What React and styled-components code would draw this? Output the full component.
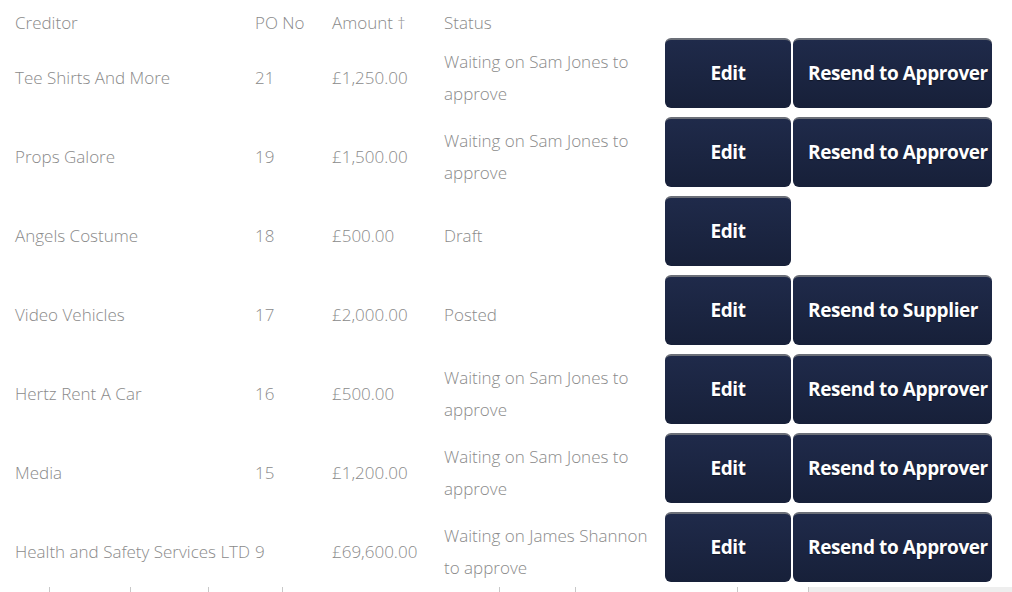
import React from 'react';
import styled, { createGlobalStyle } from 'styled-components';

const GlobalStyle = createGlobalStyle`
  html, body {
    margin: 0;
    padding: 0;
    background: #ffffff;
    font-family: "Open Sans", "Liberation Sans", sans-serif;
    overflow: hidden;
  }
`;

const Page = styled.div`
  width: 1012px;
  height: 592px;
  overflow: hidden;
  display: flex;
  flex-direction: column;
`;

const Grid = styled.div`
  display: grid;
  grid-template-columns: 240px 77px 112px 221px 330px;
  padding-left: 15px;
  color: #8a8a8a;
  font-weight: 300;
  font-size: 17px;
`;

const HeadCell = styled.div`
  height: 35px;
  padding-top: 12px;
  box-sizing: border-box;
  line-height: 22px;
  white-space: nowrap;
`;

const Cell = styled.div`
  height: 79px;
  display: flex;
  align-items: center;
  padding-top: 7px;
  box-sizing: border-box;
  white-space: ${p => (p.$wrap ? 'normal' : 'nowrap')};
  line-height: ${p => (p.$wrap ? '32px' : '22px')};
  padding-right: ${p => (p.$wrap ? '8px' : '0')};
`;

const Actions = styled.div`
  height: 79px;
  display: flex;
  gap: 2px;
  padding-top: 3px;
  box-sizing: border-box;
  align-items: flex-start;
`;

const Button = styled.button`
  height: 70px;
  width: ${p => (p.$wide ? '199px' : '126px')};
  border: none;
  border-top: 2px solid #6b6f78;
  border-radius: 6px;
  background: linear-gradient(to bottom, #1f2a4a 0%, #172039 100%);
  color: #ffffff;
  font-family: "Open Sans", "Liberation Sans", sans-serif;
  font-weight: 700;
  font-size: 19px;
  letter-spacing: -0.4px;
  text-shadow: 0 1px 1px rgba(0, 0, 0, 0.4);
  text-align: ${p => (p.$wide ? 'left' : 'center')};
  padding: ${p => (p.$wide ? '0 0 3px 15px' : '0 0 3px')};
  white-space: nowrap;
  cursor: pointer;
`;

const Footer = styled.div`
  position: relative;
  height: 8px;
  margin-top: -4px;
`;

const Tick = styled.span`
  position: absolute;
  top: 3px;
  width: 1px;
  height: 5px;
  background: #c8c8c8;
`;

const Shade = styled.div`
  position: absolute;
  left: 808px;
  right: 0;
  top: 3px;
  bottom: 0;
  background: #eeeeee;
  border-left: 1px solid #c8c8c8;
`;

const rows = [
  { creditor: 'Tee Shirts And More', po: '21', amount: '£1,250.00', status: 'Waiting on Sam Jones to approve', resend: 'Resend to Approver' },
  { creditor: 'Props Galore', po: '19', amount: '£1,500.00', status: 'Waiting on Sam Jones to approve', resend: 'Resend to Approver' },
  { creditor: 'Angels Costume', po: '18', amount: '£500.00', status: 'Draft' },
  { creditor: 'Video Vehicles', po: '17', amount: '£2,000.00', status: 'Posted', resend: 'Resend to Supplier' },
  { creditor: 'Hertz Rent A Car', po: '16', amount: '£500.00', status: 'Waiting on Sam Jones to approve', resend: 'Resend to Approver' },
  { creditor: 'Media', po: '15', amount: '£1,200.00', status: 'Waiting on Sam Jones to approve', resend: 'Resend to Approver' },
  { creditor: 'Health and Safety Services LTD', po: '9', amount: '£69,600.00', status: 'Waiting on James Shannon to approve', resend: 'Resend to Approver' },
];

const ticks = [49, 130, 208, 282, 499, 575, 737];

export default function App() {
  return (
    <Page>
      <GlobalStyle />
      <Grid>
        <HeadCell>Creditor</HeadCell>
        <HeadCell>PO No</HeadCell>
        <HeadCell>Amount †</HeadCell>
        <HeadCell>Status</HeadCell>
        <HeadCell />
        {rows.map(r => (
          <React.Fragment key={r.po}>
            <Cell>{r.creditor}</Cell>
            <Cell>{r.po}</Cell>
            <Cell>{r.amount}</Cell>
            <Cell $wrap>{r.status}</Cell>
            <Actions>
              <Button>Edit</Button>
              {r.resend && <Button $wide>{r.resend}</Button>}
            </Actions>
          </React.Fragment>
        ))}
      </Grid>
      <Footer>
        {ticks.map(x => (
          <Tick key={x} style={{ left: x }} />
        ))}
        <Shade />
      </Footer>
    </Page>
  );
}
